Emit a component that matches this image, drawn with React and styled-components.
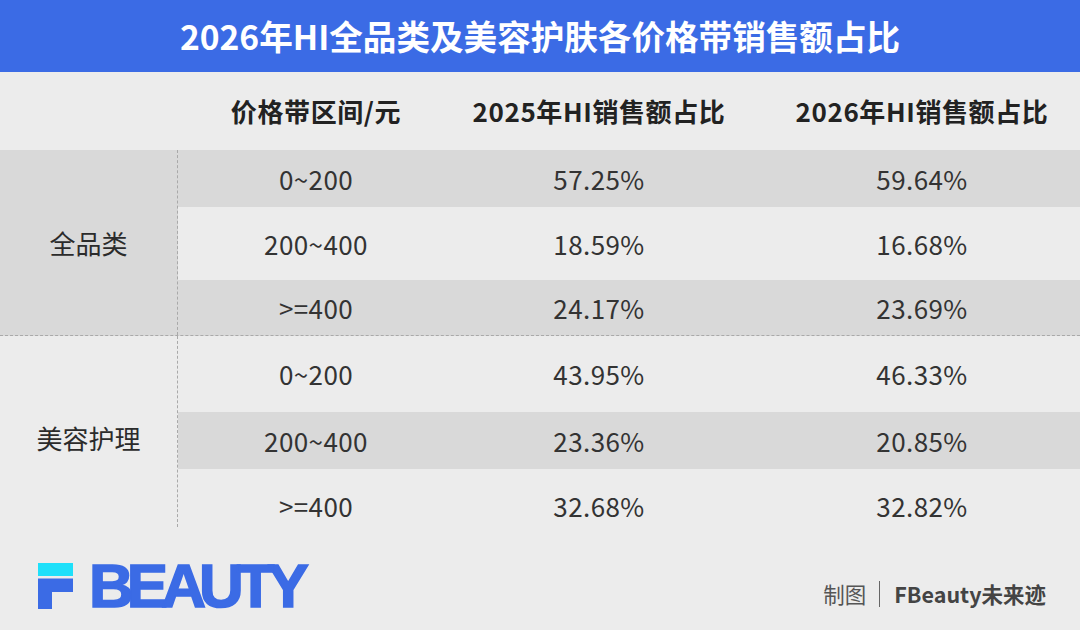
import React from "react";
import styled, { createGlobalStyle } from "styled-components";

const GlobalStyle = createGlobalStyle`
    html, body {
        margin: 0;
        padding: 0;
        background: #ececec;
    }
    body {
        font-family: "Noto Sans CJK SC", "Noto Sans", sans-serif;
    }
`;

const Page = styled.div`
    width: 1080px;
    height: 630px;
    overflow: hidden;
    background: #ececec;
    display: flex;
    flex-direction: column;
`;

const TitleBar = styled.div`
    height: 72px;
    background: #3b6be5;
    display: flex;
    align-items: center;
    justify-content: center;
`;

const Title = styled.h1`
    margin: 0;
    color: #fff;
    font-size: 33.6px;
    font-weight: 700;
    line-height: 1;
    letter-spacing: 0;
`;

const Band = styled.div`
    display: flex;
    height: ${props => props.$height}px;
    background: ${props => props.$dark ? "#d9d9d9" : "#ececec"};
    border-bottom: ${props => props.$divider ? "1px dashed #a9a9a9" : "none"};
    box-sizing: border-box;
`;

const Label = styled.div`
    width: 178px;
    flex-shrink: 0;
    box-sizing: border-box;
    display: flex;
    align-items: center;
    justify-content: center;
    font-size: 26px;
    color: #2b2b2b;
    border-right: ${props => props.$line ? "1px dashed #a9a9a9" : "none"};
    margin-bottom: ${props => props.$trim || 0}px;
    padding-top: ${props => props.$trim ? props.$trim - 4 : 0}px;
`;

const Rows = styled.div`
    flex: 1;
    display: flex;
    flex-direction: column;
`;

const Row = styled.div`
    display: grid;
    grid-template-columns: 276px 290px 1fr;
    height: ${props => props.$height}px;
    background: ${props => props.$dark ? "#d9d9d9" : "#ececec"};
    align-items: center;
`;

const Cell = styled.div`
    text-align: center;
    font-size: 26px;
    font-weight: ${props => props.$head ? 700 : 400};
    color: ${props => props.$head ? "#222" : "#333"};
    letter-spacing: ${props => props.$head ? "0.6px" : "0.4px"};
    padding-left: ${props => props.$last ? 20 : 0}px;
    line-height: 1;
`;

const Footer = styled.div`
    flex: 1;
    display: flex;
    align-items: center;
    justify-content: space-between;
    padding: 0 34px 0 38px;
`;

const Logo = styled.div`
    display: flex;
    align-items: center;
    gap: 16px;
    margin-top: -1px;
`;

const LogoWord = styled.span`
    font-family: "Liberation Sans", Arial, sans-serif;
    font-weight: 700;
    font-size: 62px;
    line-height: 1;
    color: #3b6be5;
    letter-spacing: -7px;
    -webkit-text-stroke: 1.6px #3b6be5;
`;

const Credit = styled.div`
    display: flex;
    align-items: center;
    font-size: 21.5px;
    color: #555;
    margin-top: 14px;
`;

const Sep = styled.span`
    width: 1px;
    height: 26px;
    background: #666;
    margin: 0 14px 0 13px;
`;

const Brand = styled.span`
    font-weight: 700;
    color: #444;
`;

const groups = [
    {
        name: "全品类",
        dark: true,
        rows: [
            ["0~200", "57.25%", "59.64%", 57, true],
            ["200~400", "18.59%", "16.68%", 73, false],
            [">=400", "24.17%", "23.69%", 55, true],
        ],
    },
    {
        name: "美容护理",
        dark: false,
        rows: [
            ["0~200", "43.95%", "46.33%", 76, false],
            ["200~400", "23.36%", "20.85%", 57, true],
            [">=400", "32.68%", "32.82%", 74, false],
        ],
    },
];

const FMark = () => (
    <svg width="35" height="46" viewBox="0 0 35 46">
        <rect x="0" y="0" width="35" height="13" fill="#1ee0fa" />
        <path d="M0 15.5 H35 V29 H14 V46 H0 Z" fill="#3b6be5" />
    </svg>
);

export default function App() {
    return (
        <Page>
            <GlobalStyle />
            <TitleBar>
                <Title>2026年HI全品类及美容护肤各价格带销售额占比</Title>
            </TitleBar>
            <Band $height={78}>
                <Label />
                <Rows>
                    <Row $height={78}>
                        <Cell $head>价格带区间/元</Cell>
                        <Cell $head>2025年HI销售额占比</Cell>
                        <Cell $head $last>2026年HI销售额占比</Cell>
                    </Row>
                </Rows>
            </Band>
            {groups.map((g, gi) => (
                <Band
                    key={g.name}
                    $dark={g.dark}
                    $divider={gi === 0}
                    $height={g.rows.reduce((s, r) => s + r[3], 0) + (gi === 0 ? 1 : 0)}
                >
                    <Label $line $trim={gi === 1 ? 16 : 0}>{g.name}</Label>
                    <Rows>
                        {g.rows.map(r => (
                            <Row key={r[0]} $height={r[3]} $dark={r[4]}>
                                <Cell>{r[0]}</Cell>
                                <Cell>{r[1]}</Cell>
                                <Cell $last>{r[2]}</Cell>
                            </Row>
                        ))}
                    </Rows>
                </Band>
            ))}
            <Footer>
                <Logo>
                    <FMark />
                    <LogoWord>BEAUTY</LogoWord>
                </Logo>
                <Credit>
                    制图
                    <Sep />
                    <Brand>FBeauty未来迹</Brand>
                </Credit>
            </Footer>
        </Page>
    );
}
